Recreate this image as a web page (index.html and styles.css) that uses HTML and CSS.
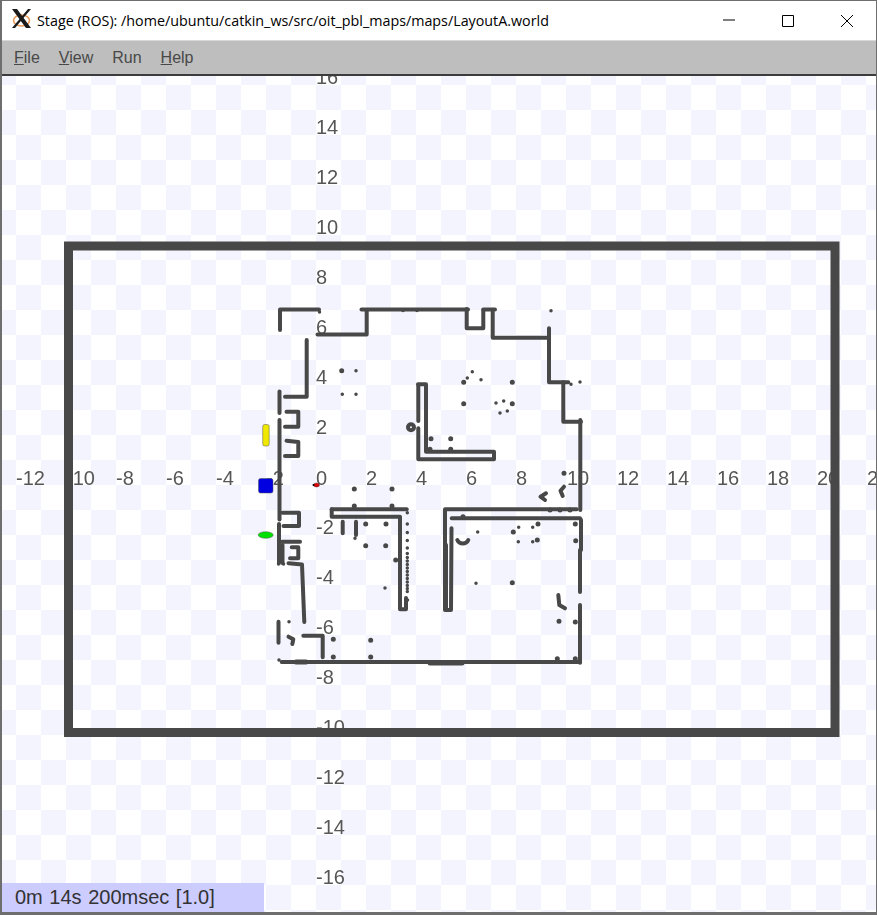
FILE: index.html
```html
<!DOCTYPE html>
<html>
<head>
    <meta charset="utf-8">
    <title>Stage (ROS)</title>
    <link rel="stylesheet" href="styles.css">
</head>
<body>
<div class="window">
    <div class="titlebar">
        <svg class="app-icon" width="20" height="20" viewBox="0 0 20 20">
            <ellipse class="logo-glow" cx="9.5" cy="11.5" rx="8" ry="5.5"/>
            <path class="logo-x" d="M0 0 H5 L19 19 H14 Z"/>
            <path class="logo-x" d="M16 0 H19 L3 19 H0 Z"/>
        </svg>
        <span class="title">Stage (ROS): /home/ubuntu/catkin_ws/src/oit_pbl_maps/maps/LayoutA.world</span>
        <div class="win-buttons">
            <svg class="win-btn" width="12" height="12" viewBox="0 0 12 12"><path d="M0 5 H12"/></svg>
            <svg class="win-btn" width="12" height="12" viewBox="0 0 12 12"><path d="M0.5 0.5 H11.5 V11.5 H0.5 Z"/></svg>
            <svg class="win-btn" width="12" height="12" viewBox="0 0 12 12"><path d="M0 0 L12 12 M12 0 L0 12"/></svg>
        </div>
    </div>

    <div class="menubar">
        <span class="menu-item"><u>F</u>ile</span>
        <span class="menu-item"><u>V</u>iew</span>
        <span class="menu-item">Run</span>
        <span class="menu-item"><u>H</u>elp</span>
    </div>

    <div class="canvas">
        <svg class="world" viewBox="2 76 874 836" width="874" height="836">
            <!-- grid labels go first, the walls cover them -->
            <g class="ticks">
                <text x="16" y="484.5">-12</text>
                <text x="66" y="484.5">-10</text>
                <text x="116" y="484.5">-8</text>
                <text x="166" y="484.5">-6</text>
                <text x="216" y="484.5">-4</text>
                <text x="266" y="484.5">-2</text>
                <text x="316" y="484.5">0</text>
                <text x="366" y="484.5">2</text>
                <text x="416" y="484.5">4</text>
                <text x="466" y="484.5">6</text>
                <text x="516" y="484.5">8</text>
                <text x="567" y="484.5">10</text>
                <text x="617" y="484.5">12</text>
                <text x="667" y="484.5">14</text>
                <text x="717" y="484.5">16</text>
                <text x="767" y="484.5">18</text>
                <text x="817" y="484.5">20</text>
                <text x="867" y="484.5">22</text>

                <text x="316" y="83.5">16</text>
                <text x="316" y="133.5">14</text>
                <text x="316" y="183.5">12</text>
                <text x="316" y="233.5">10</text>
                <text x="316" y="283.5">8</text>
                <text x="316" y="333.5">6</text>
                <text x="316" y="383.5">4</text>
                <text x="316" y="433.5">2</text>
                <text x="316" y="533.5">-2</text>
                <text x="316" y="583.5">-4</text>
                <text x="316" y="633.5">-6</text>
                <text x="316" y="683.5">-8</text>
                <text x="316" y="733.5">-10</text>
                <text x="316" y="783.5">-12</text>
                <text x="316" y="833.5">-14</text>
                <text x="316" y="883.5">-16</text>
            </g>

            <rect class="arena" x="68.5" y="246" width="766.5" height="486.5"/>

            <!-- left side -->
            <g class="wall">
                <path d="M280 330 V309.5 H319"/>
                <path d="M317.5 334.5 H366.7 V311"/>
                <path d="M361.5 309.5 H468"/>
                <path d="M306.7 340 V396.7 H285"/>
                <path d="M279.5 391.5 V413"/>
                <path d="M279.5 420 V519.5"/>
                <path d="M286.5 411.7 H298.3 V426.7 H285"/>
                <path d="M286.5 440.7 L298.3 442 V456 H285"/>
                <path d="M282.5 512.7 H299 V526 H283.5"/>
                <path d="M279 524 V563"/>
                <path d="M282 541.7 H300"/>
                <path d="M282.5 545 V563"/>
                <path d="M291.7 547.3 H298.3 V558.3 H290"/>
                <path d="M288.5 563.3 L302 564.5 L304.3 622"/>
                <path d="M278.5 621.7 V642.7"/>
                <path d="M288.5 636.7 L293.3 639.3 L292.3 644"/>
                <path d="M303.3 635.7 H322.7 V657.3"/>
                <path d="M342.7 521.7 V533.3"/>
                <path d="M356 521.7 V535"/>
            </g>

            <!-- middle and right rooms -->
            <g class="wall">
                <path d="M418.3 385 V421"/>
                <path d="M418.3 428.3 V459.3 H494 V451.7 H426 V384.3 H418"/>
                <path d="M466.7 309 V328.3 H483.3 V310"/>
                <path d="M483.3 309.5 H495"/>
                <path d="M492.7 311.7 V337.7 H548.3"/>
                <path d="M549 328.3 V382.3 H568.3"/>
                <path d="M563.3 382.3 V421.7 H581"/>
                <path d="M580.3 420 V510"/>
                <path d="M331.7 509.3 H406.7"/>
                <path d="M331.7 509.3 V516.7 H400 V609.3 H406 V598"/>
                <path d="M445 610 V509.3 H576.7"/>
                <path d="M451.7 518.3 H580 L581 520 V550"/>
                <path d="M580 550 V592"/>
                <path d="M580 605 V662.7"/>
                <path d="M446 545 V610 H451 L451.5 528.3"/>
                <path d="M281.7 662 H580"/>
                <path class="thick" d="M430 663 H462"/>
                <path class="thick" d="M296 662 H306"/>
                <path d="M457.3 540 A6 6 0 0 0 468.3 540"/>
                <path d="M546 493.3 L540.5 496.7 L545 500"/>
                <path d="M564 486.7 L560.5 490.7 L562.7 496"/>
                <path d="M558.3 595 L559.3 605 L565 608.3"/>
                <circle cx="411" cy="427.3" r="3"/>
            </g>

            <path class="dots" d="M319.5 312h0 M356 370.7h0 M342.3 394.3h0 M356 394.3h0 M472.3 371.7h0 M467.3 378h0 M481 379.7h0 M496 403h0 M503.7 401h0 M500 413h0 M507.3 411h0 M551 310.7h0 M571 384.3h0 M580 382h0 M289 621.7h0 M355 538.3h0 M385 588h0 M278.5 564h0 M283.5 564h0 M279 660h0 M477.7 532h0 M518.7 527.3h0 M532.7 527.3h0 M518.3 541.7h0 M532.7 541.7h0 M476 583.3h0 M417 310.5h0 M403 310.5h0 M407.3 512.7h0 M407.3 524h0 M407.3 532.5h0 M407.3 540.5h0 M407.3 548h0 M407.3 553.5h0 M407.3 557.5h0 M407.3 561h0 M407.3 564.5h0 M407.3 568h0 M407.3 571.5h0 M407.3 575h0 M407.3 578.5h0 M407.3 582h0 M407.3 585.5h0 M407.3 588.5h0 M407.3 591.5h0 M407.5 600h0"/>
            <path class="dots big" d="M341.7 370.7h0 M463.7 382.3h0 M512.3 382.3h0 M463.7 403.7h0 M512.3 403.7h0 M431 438.7h0 M450.7 438.7h0 M430 449.3h0 M450.7 449.3h0 M564 473.3h0 M354.3 489h0 M392 489h0 M354.3 506h0 M392 506h0 M365.7 524h0 M386 524h0 M365.7 545.7h0 M385.7 545.7h0 M333.3 639.3h0 M370.7 640.3h0 M333.3 657h0 M370.7 657h0 M395.7 560h0 M513.3 532h0 M538 524h0 M537.3 540h0 M575.3 524h0 M575.7 540.7h0 M512.3 582.7h0 M559 621.3h0 M575.3 622h0 M557.3 658.7h0 M575.3 658.7h0 M560 510h0 M570 510h0 M463 516.7h0 M550 510h0"/>

            <rect class="robot yellow" x="262.7" y="424.5" width="6.5" height="21.5" rx="2"/>
            <rect class="robot blue" x="258.5" y="478.5" width="14.5" height="14.5" rx="2"/>
            <ellipse class="robot green" cx="265.7" cy="535" rx="7.5" ry="3.3"/>
            <ellipse class="robot red" cx="316.5" cy="485" rx="3" ry="2"/>
            <circle class="robot-nose" cx="313.5" cy="485" r="1"/>
        </svg>
        <div class="status">0m 14s 200msec [1.0]</div>
    </div>
</div>
</body>
</html>
```

FILE: styles.css
```css
html, body {
    margin: 0;
    padding: 0;
    background: #ffffff;
}

.window {
    width: 877px;
    height: 915px;
    box-sizing: border-box;
    display: flex;
    flex-direction: column;
    border-top: 1px solid #6e6e6e;
    border-left: 2px solid #6e6e6e;
    border-right: 1px solid #6e6e6e;
    border-bottom: 3px solid #6e6e6e;
}

.titlebar {
    height: 39px;
    display: flex;
    align-items: center;
    background: #ffffff;
    color: #000000;
    font-family: "Open Sans", sans-serif;
    font-size: 14.3px;
}
.app-icon {
    margin-left: 10px;
    margin-right: 5px;
    margin-top: -3px;
}
.logo-x {
    fill: #1a1a1a;
}
.logo-glow {
    fill: none;
    stroke: #ee9a55;
    stroke-width: 1.6;
}
.title {
    white-space: nowrap;
}
.win-buttons {
    margin-left: auto;
    margin-right: 23px;
    display: flex;
    gap: 47px;
}
.win-btn {
    fill: none;
    stroke: #000000;
    stroke-width: 1;
}

.menubar {
    height: 36px;
    box-sizing: border-box;
    display: flex;
    align-items: center;
    gap: 19px;
    padding: 0 0 0 12px;
    background: #bebebe;
    border-top: 1px solid #d8d8d8;
    border-bottom: 2px solid #3c3c3c;
    color: #484848;
    font-family: "Liberation Sans", Arial, sans-serif;
    font-size: 16px;
}

.canvas {
    position: relative;
    flex: 1;
    overflow: hidden;
    background-color: #ffffff;
    background-image:
        conic-gradient(#f4f4ff 25%, transparent 25% 50%, #f4f4ff 50% 75%, transparent 75%);
    background-size: 50px 50px;
    background-position: 39px 9px;
}
.world {
    display: block;
    filter: blur(0.4px);
}

.ticks text {
    font-family: "Liberation Sans", Arial, sans-serif;
    font-size: 20px;
    fill: #565656;
}
.arena {
    fill: none;
    stroke: #484848;
    stroke-width: 9;
}
.wall path, .wall circle {
    fill: none;
    stroke: #484848;
    stroke-width: 4;
    stroke-linecap: round;
    stroke-linejoin: round;
}
.wall .thick {
    stroke-width: 5;
}
.dots {
    fill: none;
    stroke: #484848;
    stroke-width: 3.5;
    stroke-linecap: round;
}
.dots.big {
    stroke-width: 5;
}

.robot {
    stroke: #555555;
    stroke-width: 0.5;
}
.yellow {
    fill: #f0e800;
}
.blue {
    fill: #0000e0;
}
.green {
    fill: #00e000;
}
.red {
    fill: #e00000;
}
.robot-nose {
    fill: #000000;
}

.status {
    position: absolute;
    left: 0;
    bottom: 0;
    width: 262px;
    height: 29px;
    box-sizing: border-box;
    padding: 3px 0 0 13px;
    background: #ccccff;
    color: #333333;
    font-family: "Liberation Sans", Arial, sans-serif;
    font-size: 20px;
    word-spacing: 1px;
    white-space: nowrap;
}
```
